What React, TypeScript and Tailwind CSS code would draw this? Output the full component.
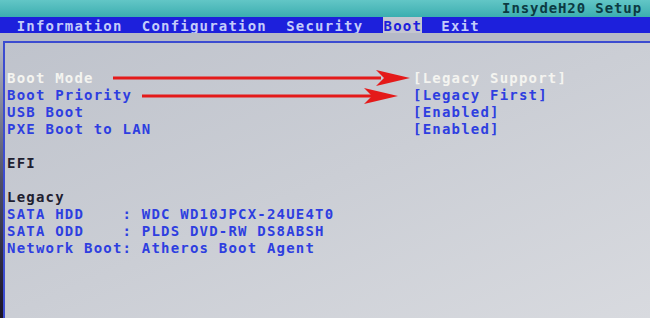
import React from "react";

const mono = { fontFamily: '"DejaVu Sans Mono", "Liberation Mono", monospace' };

function Arrows() {
  return (
    <svg
      className="pointer-events-none absolute left-0 top-0"
      width={650}
      height={318}
      viewBox="0 0 650 318"
    >
      <rect x={113} y={76.5} width={268} height={3} fill="#e41a1a" />
      <polygon points="410,78 376,70 384,78 376,86" fill="#e41a1a" />
      <rect x={142} y={94.5} width={230} height={3} fill="#e41a1a" />
      <polygon points="398,96 364,88 372,96 364,104" fill="#e41a1a" />
    </svg>
  );
}

type Row = { label: string; value?: string; color: "white" | "blue" | "dark" };

const rows: Row[] = [
  { label: "Boot Mode", value: "[Legacy Support]", color: "white" },
  { label: "Boot Priority", value: "[Legacy First]", color: "blue" },
  { label: "USB Boot", value: "[Enabled]", color: "blue" },
  { label: "PXE Boot to LAN", value: "[Enabled]", color: "blue" },
  { label: "", color: "dark" },
  { label: "EFI", color: "dark" },
  { label: "", color: "dark" },
  { label: "Legacy", color: "dark" },
  { label: "SATA HDD    : WDC WD10JPCX-24UE4T0", color: "blue" },
  { label: "SATA ODD    : PLDS DVD-RW DS8ABSH", color: "blue" },
  { label: "Network Boot: Atheros Boot Agent", color: "blue" },
];

const colorClass = {
  white: "text-[#f4f4f0]",
  blue: "text-[#2e3ee0]",
  dark: "text-[#1e2030]",
};

export default function App() {
  return (
    <div
      className="relative flex h-[318px] w-[650px] flex-col overflow-hidden bg-[#c8cbd2] font-bold text-[14px] tracking-[1.2px]"
      style={mono}
    >
      {/* title bar */}
      <div className="flex h-[17px] items-start justify-end bg-gradient-to-b from-[#62c6c6] to-[#3aaeb0] pr-[8px] leading-[17px] tracking-[0.9px] text-[#0c3a42]">
        <span className="whitespace-pre">InsydeH20 Setup</span>
      </div>
      {/* menu bar */}
      <div className="flex h-[16px] bg-[#1d20dc] pl-[7px] text-[#c4ccfa]">
        <span className="block h-[16px] whitespace-pre pt-[3px] leading-[13px]"> Information  Configuration  Security  </span>
        <span className="block h-[16px] whitespace-pre bg-[#c4c6d0] pl-[1px] pt-[3px] leading-[13px] text-[#1d20dc]">Boot</span>
        <span className="block h-[16px] whitespace-pre pt-[3px] leading-[13px]">  Exit</span>
      </div>
      {/* strip */}
      <div className="h-[8px] bg-[#b6bac6]" />
      {/* content */}
      <div className="flex flex-1">
        <div className="w-[3px] bg-gradient-to-b from-[#b6bac6] via-[#505068] to-[#1a1426]" />
        <div className="flex-1 border-l-2 border-t-2 border-[#3c4cd0] bg-gradient-to-br from-[#bfc3cc] via-[#cbced5] to-[#d8dadf] pl-[2px] pt-[27px]">
          {rows.map((r, i) => (
            <div key={i} className="flex h-[17px] leading-[17px]">
              <span className={`w-[406px] whitespace-pre ${colorClass[r.color]}`}>{r.label}</span>
              {r.value && (
                <span className={`whitespace-pre ${colorClass[r.color]}`}>{r.value}</span>
              )}
            </div>
          ))}
        </div>
      </div>
      <Arrows />
    </div>
  );
}
